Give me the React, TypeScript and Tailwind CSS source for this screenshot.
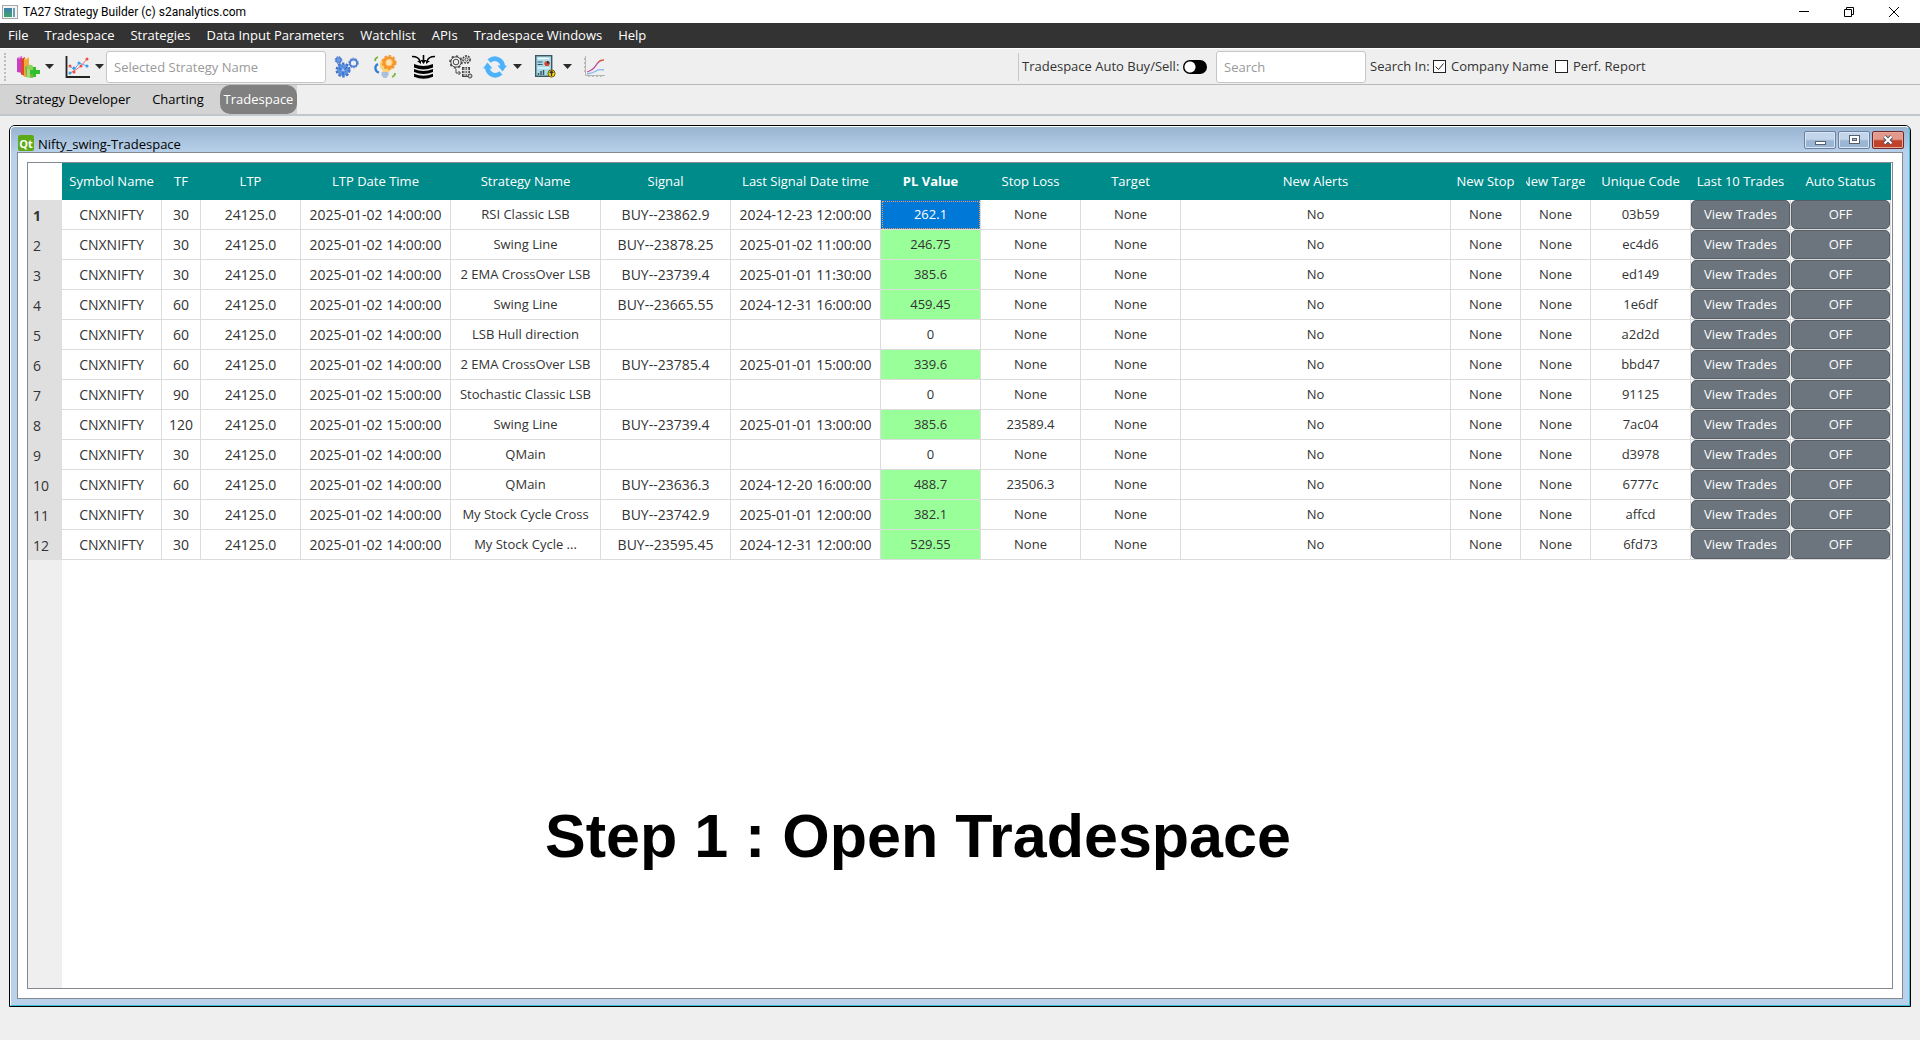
import React from "react";

const menus = ["File", "Tradespace", "Strategies", "Data Input Parameters", "Watchlist", "APIs", "Tradespace Windows", "Help"];

type Col = { name: string; width: string };

const cols: Col[] = [
  { name: "Symbol Name", width: "w-[100px]" },
  { name: "TF", width: "w-[39px]" },
  { name: "LTP", width: "w-[100px]" },
  { name: "LTP Date Time", width: "w-[150px]" },
  { name: "Strategy Name", width: "w-[150px]" },
  { name: "Signal", width: "w-[130px]" },
  { name: "Last Signal Date time", width: "w-[150px]" },
  { name: "PL Value", width: "w-[100px]" },
  { name: "Stop Loss", width: "w-[100px]" },
  { name: "Target", width: "w-[100px]" },
  { name: "New Alerts", width: "" },
  { name: "New Stop", width: "w-[70px]" },
  { name: "New Target", width: "w-[70px]" },
  { name: "Unique Code", width: "w-[100px]" },
  { name: "Last 10 Trades", width: "w-[100px]" },
  { name: "Auto Status", width: "w-[100px]" },
];

type Row = {
  tf: string;
  time: string;
  strategy: string;
  signal: string;
  signalTime: string;
  pl: string;
  stop: string;
  code: string;
};

const rows: Row[] = [
  { tf: "30", time: "2025-01-02 14:00:00", strategy: "RSI Classic LSB", signal: "BUY--23862.9", signalTime: "2024-12-23 12:00:00", pl: "262.1", stop: "None", code: "03b59" },
  { tf: "30", time: "2025-01-02 14:00:00", strategy: "Swing Line", signal: "BUY--23878.25", signalTime: "2025-01-02 11:00:00", pl: "246.75", stop: "None", code: "ec4d6" },
  { tf: "30", time: "2025-01-02 14:00:00", strategy: "2 EMA CrossOver LSB", signal: "BUY--23739.4", signalTime: "2025-01-01 11:30:00", pl: "385.6", stop: "None", code: "ed149" },
  { tf: "60", time: "2025-01-02 14:00:00", strategy: "Swing Line", signal: "BUY--23665.55", signalTime: "2024-12-31 16:00:00", pl: "459.45", stop: "None", code: "1e6df" },
  { tf: "60", time: "2025-01-02 14:00:00", strategy: "LSB Hull direction", signal: "", signalTime: "", pl: "0", stop: "None", code: "a2d2d" },
  { tf: "60", time: "2025-01-02 14:00:00", strategy: "2 EMA CrossOver LSB", signal: "BUY--23785.4", signalTime: "2025-01-01 15:00:00", pl: "339.6", stop: "None", code: "bbd47" },
  { tf: "90", time: "2025-01-02 15:00:00", strategy: "Stochastic Classic LSB", signal: "", signalTime: "", pl: "0", stop: "None", code: "91125" },
  { tf: "120", time: "2025-01-02 15:00:00", strategy: "Swing Line", signal: "BUY--23739.4", signalTime: "2025-01-01 13:00:00", pl: "385.6", stop: "23589.4", code: "7ac04" },
  { tf: "30", time: "2025-01-02 14:00:00", strategy: "QMain", signal: "", signalTime: "", pl: "0", stop: "None", code: "d3978" },
  { tf: "60", time: "2025-01-02 14:00:00", strategy: "QMain", signal: "BUY--23636.3", signalTime: "2024-12-20 16:00:00", pl: "488.7", stop: "23506.3", code: "6777c" },
  { tf: "30", time: "2025-01-02 14:00:00", strategy: "My Stock Cycle Cross", signal: "BUY--23742.9", signalTime: "2025-01-01 12:00:00", pl: "382.1", stop: "None", code: "affcd" },
  { tf: "30", time: "2025-01-02 14:00:00", strategy: "My Stock Cycle ...", signal: "BUY--23595.45", signalTime: "2024-12-31 12:00:00", pl: "529.55", stop: "None", code: "6fd73" },
];

function AppIcon() {
  return (
    <svg width="16" height="14" viewBox="0 0 16 14" aria-hidden="true">
      <defs>
        <linearGradient id="appTeal" x1="0" y1="0" x2="0" y2="1">
          <stop offset="0" stopColor="#3f7fae" />
          <stop offset="1" stopColor="#3fa56c" />
        </linearGradient>
      </defs>
      <rect x="0.5" y="0.5" width="15" height="13" fill="#f4f4f4" stroke="#a8a8a8" />
      <rect x="2" y="3" width="8" height="9" fill="url(#appTeal)" />
      <rect x="11" y="3" width="2" height="9" fill="#6f9fb8" />
    </svg>
  );
}

function BooksIcon() {
  return (
    <svg width="24" height="24" viewBox="0 0 24 24" aria-hidden="true">
      <path d="M1 3l5-2v17l-5-1z" fill="#c83fc4" />
      <path d="M1 3l5-2 1 .6-4 2.2z" fill="#e69be4" />
      <path d="M5 4l4-2v19l-4-1.500z" fill="#e2452f" />
      <path d="M8 4l5-2v19l-5 1z" fill="#f0a93a" />
      <path d="M8 4l4-2 2 .5-4 2z" fill="#fbdc95" />
      <path d="M9 12l5-2 4 3-1 10-7-1z" fill="#79b53f" />
      <circle cx="14" cy="13" r="3.200" fill="#8fd05a" />
      <path d="M12 15h4v-3h3v3h4v4h-4v3h-3v-3h-4z" transform="translate(1 0)" fill="#2fbf2f" />
      <path d="M11 14l3 1v8l-3-1z" fill="#a6dc7c" />
    </svg>
  );
}

function ScatterIcon() {
  return (
    <svg width="25" height="24" viewBox="0 0 25 24" aria-hidden="true">
      <path d="M1.500 1v21H25" fill="none" stroke="#222" strokeWidth="1.800" />
      <path d="M5 18l4-2 7-5 6-7" fill="none" stroke="#f26a6a" strokeWidth="1" />
      <path d="M5 11l4 4 5-7 8 3" fill="none" stroke="#5aaef0" strokeWidth="1" />
      <g fill="#ee4b4b">
        <circle cx="5" cy="11" r="1.500" />
        <circle cx="9" cy="17" r="1.500" />
        <circle cx="16" cy="11" r="1.500" />
        <circle cx="22" cy="4" r="1.500" />
      </g>
      <g fill="#3f9df0">
        <circle cx="5" cy="18" r="1.500" />
        <circle cx="9" cy="13" r="1.500" />
        <circle cx="14" cy="8" r="1.500" />
        <circle cx="22" cy="11" r="1.500" />
      </g>
    </svg>
  );
}

function GearsBlueIcon() {
  return (
    <svg width="25" height="24" viewBox="0 0 25 24" aria-hidden="true">
      <circle cx="9" cy="15" r="6" fill="#5b8fe0" />
      <circle cx="9" cy="15" r="6.500" fill="none" stroke="#3f6fc8" strokeWidth="2" strokeDasharray="2.600 1.500" />
      <path d="M5 13l4 3 4-4M9 16v4" fill="none" stroke="#2f5db8" />
      <circle cx="9" cy="15" r="1.600" fill="#9fc2f5" />
      <circle cx="4.500" cy="5" r="2.600" fill="#6b9be6" stroke="#3f6fc8" />
      <circle cx="4.500" cy="5" r="3.400" fill="none" stroke="#3f6fc8" strokeDasharray="1.500 1.200" />
      <circle cx="19.500" cy="8" r="3.600" fill="none" stroke="#4f80d6" strokeWidth="2" />
      <circle cx="19.500" cy="8" r="4.800" fill="none" stroke="#4f80d6" strokeDasharray="1.800 1.200" />
    </svg>
  );
}

function IdeaIcon() {
  return (
    <svg width="24" height="24" viewBox="0 0 24 24" aria-hidden="true">
      <path d="M8.500 5a7 7 0 1 1 8 11v1h-7v-2q-5-4-1-10z" fill="#fbd277" />
      <circle cx="16" cy="7.500" r="5" fill="#fdc873" stroke="#f5952c" strokeWidth="2.600" />
      <circle cx="16" cy="7.500" r="6.800" fill="none" stroke="#f5952c" strokeWidth="1.400" strokeDasharray="2.500 2" />
      <circle cx="16" cy="7.500" r="2.600" fill="#ffe3ad" />
      <path d="M8.500 17h7v3l-2 3h-3l-2-3z" fill="#a9bfda" />
      <path d="M5 9a4.500 4.500 0 0 0 1 8.500" fill="none" stroke="#2d7fd0" strokeWidth="2.200" />
      <path d="M2 6q0-3 3-4M19 22q3-1 3-4" fill="none" stroke="#7cb83c" strokeWidth="1.800" />
    </svg>
  );
}

function DataStackIcon() {
  return (
    <svg width="25" height="24" viewBox="0 0 25 24" aria-hidden="true">
      <path d="M12.500 0v7M1 1.500q7 0 8 5M24 1.500q-7 0-8 5" fill="none" stroke="#000" strokeWidth="1.600" />
      <path d="M9.500 5l3 4 3-4zM6 6l4 3v-4zM19 6l-4 3v-4z" fill="#000" />
      <path d="M3 9q9.500 4 19 0v3.500q-9.500 4-19 0z" fill="#000" />
      <path d="M3 14q9.500 4 19 0v3q-9.500 4-19 0z" fill="#000" />
      <path d="M3 18.700q9.500 4 19 0v3q-9.500 4-19 0z" fill="#000" />
    </svg>
  );
}

function ProcessIcon() {
  return (
    <svg width="24" height="24" viewBox="0 0 24 24" fill="none" stroke="#444" aria-hidden="true">
      <circle cx="7" cy="7" r="2.800" />
      <circle cx="7" cy="7" r="5.200" />
      <circle cx="7" cy="7" r="6" strokeDasharray="2.200 2.400" strokeWidth="1.500" />
      <circle cx="17.500" cy="4.500" r="1.600" />
      <circle cx="17.500" cy="4.500" r="3.600" strokeDasharray="2 1" strokeWidth="1.600" />
      <path d="M7 14v4h4M9.500 16l2 2-2 2" />
      <rect x="13.500" y="12.500" width="7" height="9" fill="#777" />
      <path d="M13 15.500h8M13 18.500h8M16 12v9M18.500 12v9" stroke="#ddd" />
      <circle cx="21" cy="21" r="2" fill="#ccc" />
    </svg>
  );
}

function SyncIcon() {
  return (
    <svg width="24" height="22" viewBox="0 0 24 22" aria-hidden="true">
      <g fill="none" stroke="#4db2fb" strokeWidth="4.600">
        <path d="M6 5q5-4 10-1 4 2.500 3.500 7" />
        <path d="M18 17q-5 4-10 1-4-2.500-3.500-7" />
      </g>
      <path d="M14.500 9.500H24L19.500 15.500zM0 12.500h9.500L4.500 6.500z" fill="#4db2fb" />
    </svg>
  );
}

function ReportIcon() {
  return (
    <svg width="21" height="23" viewBox="0 0 21 23" aria-hidden="true">
      <rect x="0.700" y="0.700" width="16" height="20.600" fill="#a9dcea" stroke="#3f5660" strokeWidth="1.400" />
      <path d="M3 3.500h11" stroke="#fff" strokeWidth="1.400" />
      <path d="M2.500 7h5M2.500 9.500h5" stroke="#3f5660" />
      <circle cx="12" cy="8.500" r="2.600" fill="#d9412f" />
      <path d="M12 8.500v-2.600a2.600 2.600 0 0 1 2.600 2.600z" fill="#333" />
      <path d="M2.500 13h12" stroke="#fff" />
      <path d="M3.500 20v-2M6 20v-4M8.500 20v-5" stroke="#3f5660" strokeWidth="1.500" />
      <circle cx="16.500" cy="18.500" r="3.600" fill="#f3d21c" stroke="#6b5d00" />
      <path d="M16.500 21v-4M14.800 18l1.700-1.800 1.700 1.800" fill="none" stroke="#333" strokeWidth="1.200" />
    </svg>
  );
}

function CurveIcon() {
  return (
    <svg width="21" height="22" viewBox="0 0 21 22" fill="none" aria-hidden="true">
      <path d="M1.500 0v19.500H21" stroke="#b5b5b5" />
      <path d="M0 3h1M0 7h1M0 11h1M0 15h1M5 21v-1M9 21v-1M13 21v-1M17 21v-1" stroke="#8a8a8a" />
      <path d="M3 16q6-2 8.500-6t4.500-5" stroke="#c0409f" strokeWidth="1.300" />
      <path d="M15 6q1-2 5-2" stroke="#d9603f" strokeWidth="1.300" />
      <path d="M3 18q6-1 9-3t8-1" stroke="#8ab6f0" strokeWidth="1.300" />
    </svg>
  );
}

function Caret() {
  return (
    <svg width="9" height="5" viewBox="0 0 9 5" aria-hidden="true">
      <path d="M0 0h9L4.500 5z" fill="#2b2b2b" />
    </svg>
  );
}

function ToolButton({ label, children, className }: { label: string; children: React.ReactNode; className: string }) {
  return (
    <button type="button" aria-label={label} className={`flex h-8 shrink-0 items-center ${className}`}>
      {children}
    </button>
  );
}

function TitleBar() {
  return (
    <header className="flex h-[23px] items-center bg-white pl-0.5 text-black">
      <AppIcon />
      <h1 className="ml-[5px] font-[Roboto,sans-serif] text-[12px] leading-4">TA27 Strategy Builder (c) s2analytics.com</h1>
      <div className="ml-auto flex h-full items-center pr-[3px]">
        <button type="button" aria-label="Minimize" className="flex h-full w-[45px] items-center justify-center">
          <svg width="10" height="10" viewBox="0 0 10 10"><path d="M0 4.500h10" stroke="#000" /></svg>
        </button>
        <button type="button" aria-label="Restore" className="flex h-full w-[45px] items-center justify-center">
          <svg width="10" height="10" viewBox="0 0 10 10" fill="none" stroke="#000"><path d="M.5 2.500h7v7h-7zM2.500 2.500v-2h7v7h-2" /></svg>
        </button>
        <button type="button" aria-label="Close" className="flex h-full w-[46px] items-center justify-center">
          <svg width="10" height="10" viewBox="0 0 10 10"><path d="M0 0l10 10M10 0L0 10" stroke="#000" /></svg>
        </button>
      </div>
    </header>
  );
}

function Toolbar() {
  return (
    <div className="flex h-[37px] items-center border-t border-b border-t-white border-b-[#b9b9b9] text-[#333]">
      <div className="ml-1 h-7 w-0.5 shrink-0 border-l-2 border-dotted border-[#bdbdbd]" />
      <ToolButton label="Strategy library" className="ml-2.5 gap-[5px]">
        <BooksIcon />
        <Caret />
      </ToolButton>
      <ToolButton label="Charts" className="ml-[11px] gap-[5px]">
        <ScatterIcon />
        <Caret />
      </ToolButton>
      <input
        aria-label="Selected Strategy Name"
        placeholder="Selected Strategy Name"
        className="ml-0.5 h-8 w-[220px] shrink-0 rounded-[3px] border border-[#c6c6c6] bg-white px-[7px] text-[13px] outline-none placeholder:text-[#9a9a9a]"
      />
      <ToolButton label="Run strategies" className="ml-2"><GearsBlueIcon /></ToolButton>
      <ToolButton label="Optimise" className="ml-[14px]"><IdeaIcon /></ToolButton>
      <ToolButton label="Load data" className="ml-[14px]"><DataStackIcon /></ToolButton>
      <ToolButton label="Process data" className="ml-[13px]"><ProcessIcon /></ToolButton>
      <ToolButton label="Refresh" className="ml-[10px] gap-1.5">
        <SyncIcon />
        <Caret />
      </ToolButton>
      <ToolButton label="Reports" className="ml-[13px] gap-[7px]">
        <ReportIcon />
        <Caret />
      </ToolButton>
      <ToolButton label="Equity curve" className="ml-3"><CurveIcon /></ToolButton>
      <div className="ml-[413px] h-7 w-px bg-[#c8c8c8]" />
      <label htmlFor="auto" className="ml-[3px] w-[158px] whitespace-nowrap text-[13px]">Tradespace Auto Buy/Sell:</label>
      <input
        id="auto"
        type="checkbox"
        role="switch"
        className="ml-[3px] h-[14px] w-6 shrink-0 appearance-none rounded-full bg-black bg-[radial-gradient(circle_at_7px_7px,#fff_5px,transparent_6px)]"
      />
      <input
        aria-label="Search"
        placeholder="Search"
        className="ml-[9px] h-8 w-[150px] shrink-0 rounded-[3px] border border-[#c6c6c6] bg-white px-[7px] text-[13px] outline-none placeholder:text-[#9a9a9a]"
      />
      <span className="ml-1 w-[60px] whitespace-nowrap text-[13px]">Search In:</span>
      <CheckBox id="company" label="Company Name" checked width="w-[101px]" />
      <CheckBox id="perf" label="Perf. Report" width="w-[80px]" />
    </div>
  );
}

function CheckBox({ id, label, checked, width }: { id: string; label: string; checked?: boolean; width: string }) {
  return (
    <span className="ml-[3px] flex items-center">
      <span className="relative flex size-[13px] shrink-0">
        <input id={id} type="checkbox" defaultChecked={checked} className="peer size-[13px] appearance-none border border-[#222] bg-white" />
        <svg width="13" height="13" viewBox="0 0 13 13" className="pointer-events-none absolute inset-0 hidden peer-checked:block" aria-hidden="true">
          <path d="M2.500 6.500l3 3 5-6" fill="none" stroke="#222" />
        </svg>
      </span>
      <label htmlFor={id} className={`ml-[5px] whitespace-nowrap text-[13px] ${width}`}>{label}</label>
    </span>
  );
}

function Tabs() {
  return (
    <nav className="flex h-[31px] border-b-2 border-[#c1c7cc] text-[13px] text-black">
      <div className="flex bg-[#d3d3d3]">
        <button type="button" className="w-[146px] pt-px">Strategy Developer</button>
        <button type="button" className="w-[64px] pt-px">Charting</button>
        <button type="button" className="ml-[10px] w-[77px] rounded-[10px] bg-[#808080] pt-px text-white">Tradespace</button>
      </div>
    </nav>
  );
}

function WindowButtons() {
  const plain = "flex h-[18px] w-8 items-center justify-center rounded-[2px] border border-[#6b7f9e] bg-linear-to-b from-[#c3d5ea] from-45% to-[#9bb6d3] to-55% shadow-[inset_0_0_0_1px_#d8e5f2]";
  return (
    <div className="mt-1 -mr-px ml-auto flex items-center gap-0.5 self-start">
      <button type="button" aria-label="Minimize window" className={plain}>
        <svg width="11" height="12" viewBox="0 0 11 12"><rect x=".5" y="7.500" width="10" height="3" fill="#fff" stroke="#555f70" /></svg>
      </button>
      <button type="button" aria-label="Maximize window" className={plain}>
        <svg width="11" height="10" viewBox="0 0 11 10" fill="none" stroke="#555f70"><rect x=".5" y=".5" width="10" height="8" fill="#fff" /><rect x="3.500" y="3.500" width="4" height="2" fill="#a9c0da" /></svg>
      </button>
      <button
        type="button"
        aria-label="Close window"
        className="flex h-[18px] w-8 items-center justify-center rounded-[2px] border border-[#6d2a2a] bg-linear-to-b from-[#e39a8b] from-45% to-[#c04329] to-55% shadow-[inset_0_0_0_1px_#e5a89b]"
      >
        <svg width="12" height="10" viewBox="0 0 12 10"><path d="M2.500 1.500l7 7M9.500 1.500l-7 7" stroke="#4c4f66" strokeWidth="4" /><path d="M2.500 1.500l7 7M9.500 1.500l-7 7" stroke="#fff" strokeWidth="2.200" /></svg>
      </button>
    </div>
  );
}

function plStyle(row: Row, index: number) {
  if (index === 0) return "bg-[#0078d7] text-white outline-1 -outline-offset-2 outline-dotted outline-[#f09a5a]";
  return row.pl === "0" ? "bg-white" : "bg-[#99ff99]";
}

function TradeTable() {
  const cell = "truncate border-r border-b border-[#dcdcdc] p-0 text-center";
  return (
    <table className="w-full table-fixed border-separate border-spacing-0 text-[13px] text-[#333]">
      <colgroup>
        <col className="w-[34px]" />
        {cols.map((c) => (
          <col key={c.name} className={c.width} />
        ))}
      </colgroup>
      <thead>
        <tr className="h-[37px] bg-[#008b8b] text-white">
          <td className="bg-white p-0" />
          {cols.map((c) => (
            <th key={c.name} scope="col" className={`p-0 pt-px ${c.name === "PL Value" ? "font-bold" : "font-normal"}`}>
              <div className="mr-1.5 ml-[5px] flex justify-center overflow-hidden whitespace-nowrap">{c.name}</div>
            </th>
          ))}
        </tr>
      </thead>
      <tbody>
        {rows.map((r, i) => (
          <tr key={r.code} className="h-[30px]">
            <th scope="row" className={`bg-[#dfdfdf] p-0 pt-px pl-[5px] text-left text-[14px] ${i === 0 ? "font-bold" : "font-normal"}`}>{i + 1}</th>
            <td className={`${cell} text-[14px]`}>CNXNIFTY</td>
            <td className={`${cell} text-[14px]`}>{r.tf}</td>
            <td className={`${cell} text-[14px]`}>24125.0</td>
            <td className={`${cell} text-[14px]`}>{r.time}</td>
            <td className={cell}>{r.strategy}</td>
            <td className={`${cell} text-[14px]`}>{r.signal}</td>
            <td className={`${cell} text-[14px]`}>{r.signalTime}</td>
            <td className={`${cell} ${plStyle(r, i)}`}>{r.pl}</td>
            <td className={cell}>{r.stop}</td>
            <td className={cell}>None</td>
            <td className={cell}>No</td>
            <td className={cell}>None</td>
            <td className={cell}>None</td>
            <td className={cell}>{r.code}</td>
            {["View Trades", "OFF"].map((label) => (
              <td key={label} className="border-r border-b border-[#dcdcdc] p-0">
                <button type="button" className="block h-[29px] w-full rounded-[5px] border border-[#565d64] bg-[#6c757d] text-white">{label}</button>
              </td>
            ))}
          </tr>
        ))}
      </tbody>
    </table>
  );
}

export default function App() {
  return (
    <div className="flex min-h-screen flex-col bg-[#efefef] font-['Open_Sans','Noto_Sans',sans-serif]">
      <TitleBar />
      <nav className="flex h-[25px] items-center gap-4 bg-[#333] pt-px pl-2 text-[13px] text-white">
        {menus.map((m) => (
          <button key={m} type="button">{m}</button>
        ))}
      </nav>
      <Toolbar />
      <Tabs />
      <main className="flex grow flex-col px-[9px] pt-[9px] pb-[33px]">
        <section className="flex grow flex-col rounded-t-[6px] border border-black bg-[#b9d1ea]">
          <div className="flex grow flex-col rounded-t-[5px] border border-t-white border-r-[#35c0d8] border-b-[#35c0d8] border-l-white bg-linear-to-b from-[#99b4d1] to-[#b9d1ea] to-[26px] px-1.5 pb-1.5">
            <div className="flex h-[25px] items-end pl-[1px] text-[13px] text-black">
              <span className="mb-px flex h-4 w-4 items-center justify-center rounded-[2px] bg-[#5caa15] text-[11px] leading-none font-bold text-white">Qt</span>
              <h2 className="ml-1 leading-4">Nifty_swing-Tradespace</h2>
              <WindowButtons />
            </div>
            <div className="flex grow flex-col border border-[#858990] bg-white p-[9px]">
              <div className="flex grow flex-col border border-[#858990] pr-px">
                <TradeTable />
                <div className="flex grow">
                  <div className="w-[34px] bg-[#efefef]" />
                  <p className="grow pt-[234px] pr-[117px] text-center font-['Liberation_Sans',Arial,sans-serif] text-[61px] leading-[84px] font-bold text-black">
                    Step 1 : Open Tradespace
                  </p>
                </div>
              </div>
            </div>
          </div>
        </section>
      </main>
    </div>
  );
}
